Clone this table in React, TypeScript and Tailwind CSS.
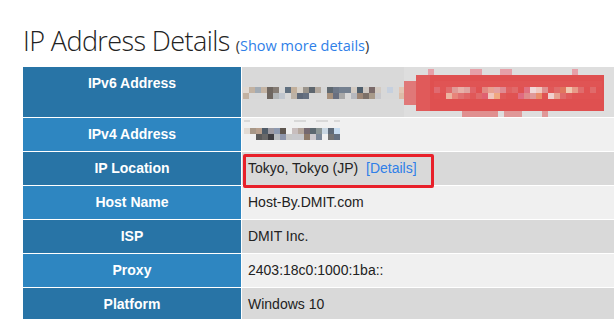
const rows1a = ["#e0d9d2", "#c2b2a2", "#a2abb4", "#c4b4a4", "#6e6660", "#857c74", "#d7d7d7", "#607080", "#c2b09c", "#d8d2ca", "#9a948c", "#5e666e", "#b2a89e", "#d6d6d6", "#5e6870", "#6e7888", "#748090", "#748090", "#d2cac2", "#4e5e6c", "#cec8c2", "#7a6a6a", "#d2cac2", "#d8d8d8", "#c6d0de", "#d8d8d8", "#e2c6b4", "#e0907e", "#e05656"];
const rows1b = ["#c2b2a2", "#d8d8d8", "#d8d8d8", "#d8d8d8", "#6e6660", "#b2b6b8", "#c0c6ce", "#d8d8d8", "#bcb2a6", "#5e6878", "#667080", "#d8d8d8", "#d8d8d8", "#d8d8d8", "#a8927e", "#6a7080", "#a8a8a8", "#d8d8d8", "#b6b8be", "#9c8676", "#7c7068", "#a89a8a", "#c8c8cc", "#d8d8d8", "#d8d8d8", "#d8d8d8", "#dcbca8", "#e07a6c", "#e05050"];
const rows2a = ["#e2dbd4", "#a89888", "#b8a08e", "#505c68", "#9c9aa2", "#8e9ab0", "#5e5650", "#f0f0f0", "#c8bebe", "#b4a69c", "#746870", "#5c6870", "#8a9494", "#c8d6e2", "#5e6a78", "#c6dcf0"];
const rows2b = ["#f0f0f0", "#f0f0f0", "#5a5a5a", "#686868", "#3e3e42", "#b8bcc0", "#8e96ac", "#c8c8c8", "#c8c8cc", "#c8c8cc", "#8e7a6a", "#cecace", "#7c8898", "#f0f0f0", "#747474", "#647080"];
const redA = ["#e06a70", "#e05555", "#e06c6c", "#e09a96", "#e8b0a8", "#e0a4a0", "#e06468", "#e05252", "#e28882", "#e8a090", "#e4a0a0", "#e08a92", "#e06060", "#e06a6a", "#e05252", "#e07080", "#f0d8d8", "#f0c8c0", "#e09090", "#e05858", "#e06a6a", "#e0765e", "#f0c8b0", "#e89a88", "#e06c6c", "#e05252", "#e06a6a", "#e05252"];
const redB = ["#e05252", "#e05050", "#ecb4a0", "#e8847a", "#e07070", "#e06464", "#e05858", "#e06a6a", "#e06070", "#f0c4bc", "#f0a880", "#e05858", "#e05252", "#e05252", "#e06a80", "#e08a8a", "#e09898", "#ea8c6a", "#e05252", "#f0d0d0", "#e8a090", "#e06a6a", "#e05a5a", "#e05252", "#e05252", "#e05252", "#e05252", "#e05252"];

function Mosaic({ rows, x0, y0 }: { rows: string[][]; x0: number; y0: number }) {
  return (
    <>
      {rows.map((r, ri) =>
        r.map((c, ci) => <rect key={`${ri}-${ci}`} x={x0 + ci * 6} y={y0 + ri * 6} width={6} height={6} fill={c} />)
      )}
    </>
  );
}

function Ipv6Blur() {
  return (
    <svg width="372" height="50" className="block">
      <rect x="0" y="0" width="372" height="50" fill="#d9d9d9" />
      <rect x="162" y="0" width="210" height="50" fill="#dedede" />
      <Mosaic rows={[rows1a, rows1b]} x0={1} y0={20} />
      <rect x="188" y="8" width="174" height="36" fill="#df5050" />
      <rect x="162" y="14" width="12" height="24" fill="#e07878" />
      <rect x="174" y="8" width="14" height="36" fill="#e05a5a" />
      <Mosaic rows={[redA, redB]} x0={192} y0={20} />
      <rect x="192" y="14" width="168" height="6" fill="#e05454" />
      <rect x="186" y="2" width="6" height="6" fill="#e6a0a8" />
      <rect x="228" y="2" width="12" height="6" fill="#e6a0a8" />
      <rect x="258" y="2" width="12" height="6" fill="#e6a0a8" />
      <rect x="330" y="2" width="6" height="6" fill="#e6a0a8" />
      <rect x="220" y="44" width="36" height="6" fill="#e09090" />
      <rect x="262" y="44" width="18" height="6" fill="#e09898" />
      <rect x="300" y="44" width="6" height="6" fill="#e09898" />
    </svg>
  );
}

function Ipv4Blur() {
  return (
    <svg width="120" height="32" className="block">
      <rect x="2" y="2" width="6" height="2" fill="#d8d8d8" />
      <rect x="52" y="2" width="12" height="2" fill="#d8d8d8" />
      <rect x="74" y="2" width="12" height="2" fill="#d8d8d8" />
      <rect x="92" y="2" width="6" height="2" fill="#d8d8d8" />
      <Mosaic rows={[rows2a, rows2b]} x0={2} y0={10} />
    </svg>
  );
}

const label = "px-2 py-2 text-center text-[14px] font-bold leading-[17px] text-white";
const value = "px-[6px] py-2 text-[14px] leading-[17px] text-[#222]";

export default function App() {
  return (
    <div className="h-[319px] w-[614px] overflow-hidden bg-white font-['Liberation_Sans',Arial,sans-serif]">
      <div className="pl-[23px] pt-[23px]">
        <h2 className="flex items-baseline gap-[6px] pb-[3px] leading-[36px]">
          <span className="font-['Open_Sans',sans-serif] text-[27px] font-light tracking-[-0.6px] text-[#222]">IP Address Details</span>
          <span className="font-['Open_Sans',sans-serif] text-[14.5px] text-[#333]">
            (<a className="text-[#2f7fe8]">Show more details</a>)
          </span>
        </h2>
        <div className="relative grid w-[620px] grid-cols-[218px_1fr] gap-px bg-white">
          <div className={`${label} bg-[#2874a6]`}>IPv6 Address</div>
          <div className="bg-[#d9d9d9]">
            <Ipv6Blur />
          </div>
          <div className={`${label} bg-[#2e86c1]`}>IPv4 Address</div>
          <div className="h-[33px] bg-[#f0f0f0]">
            <Ipv4Blur />
          </div>
          <div className={`${label} bg-[#2874a6]`}>IP Location</div>
          <div className={`${value} bg-[#d9d9d9]`}>
            Tokyo, Tokyo (JP)&nbsp;&nbsp;<a className="text-[#2f7fe8]">[Details]</a>
          </div>
          <div className={`${label} bg-[#2e86c1]`}>Host Name</div>
          <div className={`${value} bg-[#f0f0f0]`}>Host-By.DMIT.com</div>
          <div className={`${label} bg-[#2874a6]`}>ISP</div>
          <div className={`${value} bg-[#d9d9d9]`}>DMIT Inc.</div>
          <div className={`${label} bg-[#2e86c1]`}>Proxy</div>
          <div className={`${value} bg-[#f0f0f0]`}>2403:18c0:1000:1ba::</div>
          <div className={`${label} bg-[#2874a6]`}>Platform</div>
          <div className={`${value} bg-[#d9d9d9]`}>Windows 10</div>
          <div className="pointer-events-none absolute left-[220px] top-[87px] h-[34px] w-[191px] rounded-[2px] border-[3px] border-[#e8202a]" />
        </div>
      </div>
    </div>
  );
}
